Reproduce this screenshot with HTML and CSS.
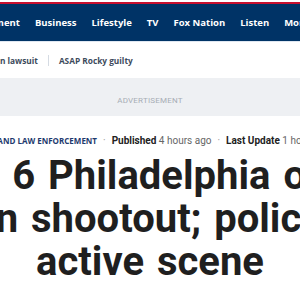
FILE: index.html
```html
<!DOCTYPE html>
<html lang="en">

<head>
    <meta charset="UTF-8">
    <meta name="viewport" content="width=device-width, initial-scale=1.0">
    <title>Philadelphia shootout</title>
    <link rel="stylesheet" href="styles.css">
</head>

<body>

    <header class="site-header">
        <nav class="main-nav">
            <a href="#">Entertainment</a>
            <a href="#">Business</a>
            <a href="#">Lifestyle</a>
            <a href="#">TV</a>
            <a href="#">Fox Nation</a>
            <a href="#">Listen</a>
            <a href="#">More</a>
        </nav>
    </header>

    <div class="trending">
        <ul class="trending-list">
            <li>Settles in lawsuit</li>
            <li>ASAP Rocky guilty</li>
        </ul>
    </div>

    <div class="ad-slot">
        <span class="ad-label">ADVERTISEMENT</span>
    </div>

    <div class="article-meta">
        <div class="meta-line">
            <span class="category">Crime and Law Enforcement</span>
            <span class="dot">·</span>
            <span><strong>Published</strong> 4 hours ago</span>
            <span class="dot">·</span>
            <span><strong>Last Update</strong> 1 hour ago</span>
        </div>
    </div>

    <div class="headline-wrap">
        <h1 class="headline">Alerts: 6 Philadelphia officers<br>struck in shootout; police at the<br>active scene</h1>
    </div>

</body>

</html>
```

FILE: styles.css
```css
/* Page */
body {
    margin: 0;
    width: 300px;
    overflow: hidden;
    background: #ffffff;
    font-family: 'Roboto', sans-serif;
}

/* Top navigation */
.site-header {
    margin-top: 2px;
    border-top: 2px solid #c8102e;
    border-bottom: 1px solid #dfe7f1;
    background: #003366;
    height: 37px;
    display: flex;
    align-items: center;
    overflow: hidden;
}

.main-nav {
    display: flex;
    gap: 15px;
    margin-left: -50px;
    white-space: nowrap;
}

.main-nav a {
    color: #ffffff;
    text-decoration: none;
    font-family: 'Open Sans', sans-serif;
    font-weight: 700;
    font-size: 9.5px;
}

/* Trending row */
.trending {
    height: 36px;
    display: flex;
    align-items: center;
    overflow: hidden;
}

.trending-list {
    list-style: none;
    margin: 0 0 0 -43px;
    padding: 0;
    display: flex;
    white-space: nowrap;
}

.trending-list li {
    font-family: 'Open Sans', sans-serif;
    font-weight: 700;
    font-size: 8.3px;
    color: #3d4b5c;
    padding: 0 10px;
}

.trending-list li + li {
    border-left: 1px solid #d5dbe3;
}

/* Advertisement */
.ad-slot {
    background: #eef0f3;
    height: 38px;
    display: flex;
    justify-content: center;
    padding-top: 18px;
    box-sizing: border-box;
}

.ad-label {
    font-size: 8px;
    color: #a7adb5;
    letter-spacing: 0.2px;
}

/* Meta */
.article-meta {
    display: flex;
    justify-content: center;
    padding-top: 19px;
}

.meta-line {
    display: flex;
    gap: 6px;
    flex-shrink: 0;
    white-space: nowrap;
    font-size: 10px;
    color: #666666;
}

.meta-line strong {
    color: #222222;
    font-weight: 700;
}

.category {
    font-family: 'Open Sans', sans-serif;
    font-weight: 700;
    font-size: 8px;
    text-transform: uppercase;
    color: #1e3a6e;
}

.dot {
    color: #999999;
}

/* Headline */
.headline-wrap {
    display: flex;
    justify-content: center;
}

.headline {
    flex-shrink: 0;
    width: 700px;
    margin: 8px 0 0;
    text-align: center;
    white-space: nowrap;
    font-size: 40px;
    line-height: 43px;
    word-spacing: 3px;
    font-weight: 700;
    color: #1f1f1f;
}
```
